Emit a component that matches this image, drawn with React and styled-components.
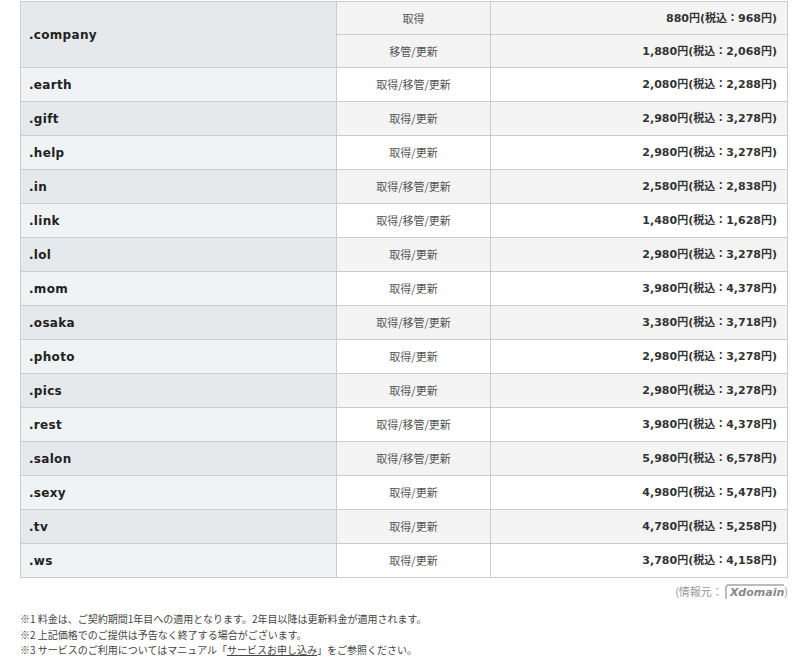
import React from "react";
import styled, { createGlobalStyle } from "styled-components";

const G = createGlobalStyle`
  body { margin: 0; background: #fff; font-family: "DejaVu Sans", Verdana, "Noto Sans CJK JP", sans-serif; }
`;
const Wrap = styled.div`padding: 1px 16px 0 20px;`;
const Table = styled.table`
  width: 768px; border-collapse: collapse; table-layout: fixed;
`;
const Dom = styled.td`
  width: 307px; border: 1px solid #ccc; padding: 0 0 0 8px; line-height: 1;
  background: ${p => (p.$alt ? "#f0f3f6" : "#e6e9ec")};
  font-weight: bold; font-size: 12px; color: #222; letter-spacing: 0.3px;
`;
const Type = styled.td`
  width: 153px; border: 1px solid #ccc; text-align: center; height: ${p => p.$h}px;
  padding: 0; line-height: 1;
  background: ${p => (p.$alt ? "#fff" : "#f4f4f4")};
  font-size: 11px; color: #555; font-family: "Noto Sans CJK JP", sans-serif;
`;
const Price = styled.td`
  border: 1px solid #ccc; text-align: right; padding: 0 10px 0 0; line-height: 1;
  background: ${p => (p.$alt ? "#fff" : "#f4f4f4")};
  font-size: 11px; font-weight: bold; color: #333;
  font-family: "DejaVu Sans", "Noto Sans CJK JP", sans-serif;
`;
const Source = styled.div`
  text-align: right; font-size: 11px; color: #999; margin-top: 5px;
  font-family: "Noto Sans CJK JP", sans-serif;
`;
const Logo = styled.span`
  font-family: "DejaVu Sans", sans-serif; font-style: italic; font-weight: bold; color: #888; font-size: 11px;
  border-left: 2px solid #bbb; border-top: 2px solid #bbb; border-radius: 4px 0 0 0; padding-left: 3px; margin-left: 2px;
`;
const Notes = styled.div`
  margin-top: 12px; font-size: 10px; color: #444; line-height: 15.5px;
  font-family: "Noto Sans CJK JP", sans-serif;
`;
const Link = styled.span`text-decoration: underline;`;

const rows = [
  [".earth", "取得/移管/更新", "2,080", "2,288"],
  [".gift", "取得/更新", "2,980", "3,278"],
  [".help", "取得/更新", "2,980", "3,278"],
  [".in", "取得/移管/更新", "2,580", "2,838"],
  [".link", "取得/移管/更新", "1,480", "1,628"],
  [".lol", "取得/更新", "2,980", "3,278"],
  [".mom", "取得/更新", "3,980", "4,378"],
  [".osaka", "取得/移管/更新", "3,380", "3,718"],
  [".photo", "取得/更新", "2,980", "3,278"],
  [".pics", "取得/更新", "2,980", "3,278"],
  [".rest", "取得/移管/更新", "3,980", "4,378"],
  [".salon", "取得/移管/更新", "5,980", "6,578"],
  [".sexy", "取得/更新", "4,980", "5,478"],
  [".tv", "取得/更新", "4,780", "5,258"],
  [".ws", "取得/更新", "3,780", "4,158"],
];

export default function App() {
  return (
    <Wrap>
      <G />
      <Table>
        <tbody>
          <tr>
            <Dom rowSpan={2}>.company</Dom>
            <Type $h={32}>取得</Type>
            <Price>880円(税込：968円)</Price>
          </tr>
          <tr>
            <Type $h={32}>移管/更新</Type>
            <Price>1,880円(税込：2,068円)</Price>
          </tr>
          {rows.map((r, i) => {
            const alt = i % 2 === 0;
            return (
              <tr key={r[0]}>
                <Dom $alt={alt}>{r[0]}</Dom>
                <Type $alt={alt} $h={33}>{r[1]}</Type>
                <Price $alt={alt}>{r[2]}円(税込：{r[3]}円)</Price>
              </tr>
            );
          })}
        </tbody>
      </Table>
      <Source>(情報元：<Logo>Xdomain</Logo>)</Source>
      <Notes>
        <div>※1 料金は、ご契約期間1年目への適用となります。2年目以降は更新料金が適用されます。</div>
        <div>※2 上記価格でのご提供は予告なく終了する場合がございます。</div>
        <div>※3 サービスのご利用についてはマニュアル「<Link>サービスお申し込み</Link>」をご参照ください。</div>
      </Notes>
    </Wrap>
  );
}
